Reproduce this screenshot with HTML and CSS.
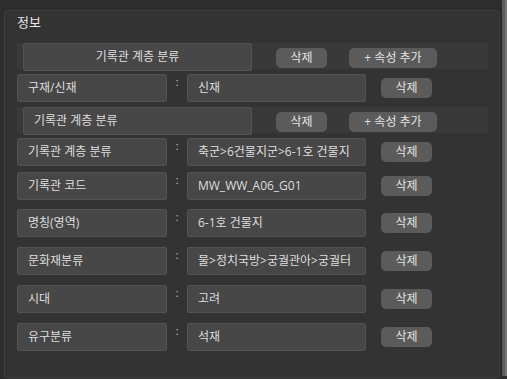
FILE: index.html
```html
<!DOCTYPE html>
<html lang="ko">
<head>
<meta charset="utf-8">
<link rel="stylesheet" href="styles.css">
</head>
<body>
<div class="window">
  <div class="panel">
    <div class="title">정보</div>

    <div class="group-head">
      <div class="group-name center">기록관 계층 분류</div>
      <button class="btn del">삭제</button>
      <button class="btn add">+ 속성 추가</button>
    </div>

    <div class="row r-after-head">
      <div class="field label">구재/신재</div>
      <div class="colon">:</div>
      <div class="field value">신재</div>
      <button class="btn row-del">삭제</button>
    </div>

    <div class="group-head r-head2">
      <div class="group-name">기록관 계층 분류</div>
      <button class="btn del">삭제</button>
      <button class="btn add">+ 속성 추가</button>
    </div>

    <div class="row r-after-head">
      <div class="field label">기록관 계층 분류</div>
      <div class="colon">:</div>
      <div class="field value">축군&gt;6건물지군&gt;6-1호 건물지</div>
      <button class="btn row-del">삭제</button>
    </div>

    <div class="row r-6">
      <div class="field label">기록관 코드</div>
      <div class="colon">:</div>
      <div class="field value">MW_WW_A06_G01</div>
      <button class="btn row-del">삭제</button>
    </div>

    <div class="row r-9">
      <div class="field label">명칭(영역)</div>
      <div class="colon">:</div>
      <div class="field value">6-1호 건물지</div>
      <button class="btn row-del">삭제</button>
    </div>

    <div class="row">
      <div class="field label">문화재분류</div>
      <div class="colon">:</div>
      <div class="field value">물&gt;정치국방&gt;궁궐관아&gt;궁궐터</div>
      <button class="btn row-del">삭제</button>
    </div>

    <div class="row">
      <div class="field label">시대</div>
      <div class="colon">:</div>
      <div class="field value">고려</div>
      <button class="btn row-del">삭제</button>
    </div>

    <div class="row">
      <div class="field label">유구분류</div>
      <div class="colon">:</div>
      <div class="field value">석재</div>
      <button class="btn row-del">삭제</button>
    </div>
  </div>
  <div class="scrollbar"></div>
</div>
</body>
</html>
```

FILE: styles.css
```css
html, body {
  margin: 0;
  padding: 0;
  width: 507px;
  height: 379px;
  overflow: hidden;
  background: #2d2d2d;
  font-family: "Open Sans", "Noto Sans CJK KR", sans-serif;
  font-size: 12px;
  color: #dedede;
}

.window {
  display: flex;
  align-items: flex-start;
  height: 379px;
  padding-left: 4px;
  box-sizing: border-box;
}

.panel {
  margin-top: 10px;
  width: 496px;
  height: 368px;
  box-sizing: border-box;
  background: #333333;
  border: 1px solid #3e3e3e;
  border-radius: 4px 4px 0 0;
  padding: 0 0 0 12px;
  display: flex;
  flex-direction: column;
}

.title {
  height: 22px;
  line-height: 22px;
  font-size: 13px;
  color: #e6e6e6;
}

.group-head {
  margin-top: 10px;
  width: 471px;
  height: 26px;
  background: #393939;
  display: flex;
  align-items: flex-start;
  flex-shrink: 0;
}

.r-head2 {
  margin-top: 5px;
}

.group-name {
  margin-left: 6px;
  width: 229px;
  height: 28px;
  box-sizing: border-box;
  background: #474747;
  border: 1px solid #535353;
  border-radius: 2px;
  line-height: 26px;
  padding-left: 10px;
  white-space: nowrap;
  position: relative;
  z-index: 1;
}

.group-name.center {
  text-align: center;
  padding-left: 0;
}

.btn {
  font-family: inherit;
  font-size: 12px;
  color: #e2e2e2;
  background: #5b5b5b;
  border: none;
  border-radius: 5px;
  height: 20px;
  padding: 0;
  line-height: 20px;
}

.del {
  margin-top: 5px;
  margin-left: 24px;
  width: 51px;
}

.add {
  margin-top: 5px;
  margin-left: 22px;
  width: 88px;
}

.row {
  display: flex;
  align-items: center;
  margin-top: 10px;
  height: 28px;
  flex-shrink: 0;
}

.r-after-head { margin-top: 5px; }
.r-6 { margin-top: 6px; }
.r-9 { margin-top: 9px; }

.field {
  height: 28px;
  box-sizing: border-box;
  background: #474747;
  border: 1px solid #535353;
  border-radius: 2px;
  line-height: 26px;
  padding-left: 10px;
  white-space: nowrap;
  overflow: hidden;
}

.label { width: 150px; }
.value { width: 179px; }

.colon {
  width: 20px;
  align-self: flex-start;
  text-align: center;
  font-size: 10px;
  line-height: 16px;
  color: #cfcfcf;
}

.row-del {
  margin-left: 15px;
  width: 51px;
}

.scrollbar {
  width: 7px;
  height: 376px;
  background: #5c5c5c;
  border-left: 2px solid #2a2a2a;
  border-right: 2px solid #747474;
  box-sizing: border-box;
}
```
